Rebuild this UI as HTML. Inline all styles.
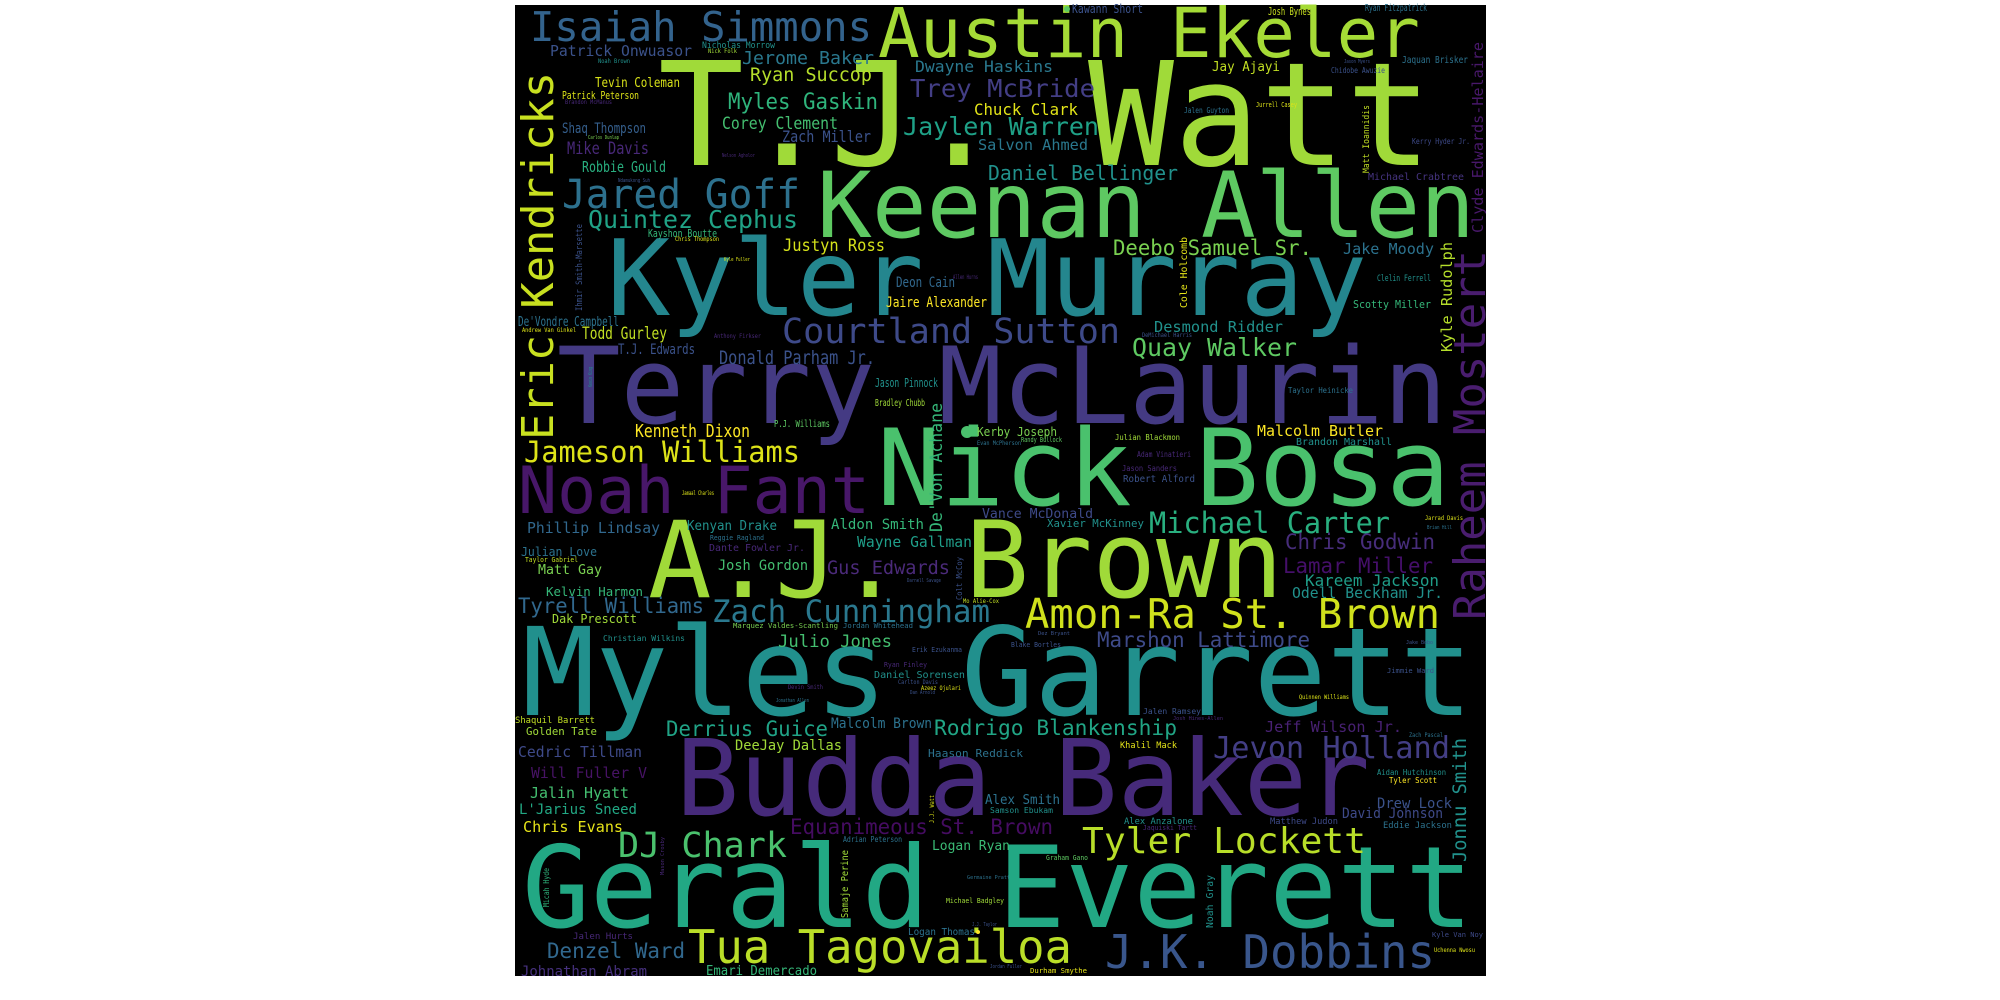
<!DOCTYPE html>
<html><head><meta charset="utf-8"><style>
html,body{margin:0;padding:0;background:#fff;width:2000px;height:1000px;overflow:hidden}
svg{display:block}
text{font-family:"DejaVu Sans Mono","Liberation Mono",monospace;}
</style></head><body>
<svg width="2000" height="1000" viewBox="0 0 2000 1000" xmlns="http://www.w3.org/2000/svg">
<rect x="0" y="0" width="2000" height="1000" fill="#fff"/>
<rect x="515" y="5" width="971" height="971" fill="#000"/>
<g lengthAdjust="spacingAndGlyphs">
<!-- big -->
<text x="658" y="165" font-size="144" fill="#a0da39" textLength="774" lengthAdjust="spacingAndGlyphs">T.J. Watt</text>
<text x="878" y="57" font-size="69" fill="#a5db36" textLength="542" lengthAdjust="spacingAndGlyphs">Austin Ekeler</text>
<text x="530" y="41" font-size="41" fill="#33638d" textLength="342" lengthAdjust="spacingAndGlyphs">Isaiah Simmons</text>
<text x="817" y="237" font-size="91" fill="#5ec962" textLength="658" lengthAdjust="spacingAndGlyphs">Keenan Allen</text>
<text x="607" y="315" font-size="105" fill="#24868e" textLength="760" lengthAdjust="spacingAndGlyphs">Kyler Murray</text>
<text x="557" y="423" font-size="106" fill="#443a83" textLength="890" lengthAdjust="spacingAndGlyphs">Terry McLaurin</text>
<text x="877" y="505" font-size="106" fill="#4ac16d" textLength="573" lengthAdjust="spacingAndGlyphs">Nick Bosa</text>
<text x="648" y="597" font-size="106" fill="#a0da39" textLength="635" lengthAdjust="spacingAndGlyphs">A.J. Brown</text>
<text x="522" y="715" font-size="122" fill="#21908d" textLength="951" lengthAdjust="spacingAndGlyphs">Myles Garrett</text>
<text x="676" y="815" font-size="105" fill="#462a7a" textLength="694" lengthAdjust="spacingAndGlyphs">Budda Baker</text>
<text x="522" y="927" font-size="113" fill="#22a884" textLength="951" lengthAdjust="spacingAndGlyphs">Gerald Everett</text>
<text x="518" y="513" font-size="65" fill="#481769" textLength="352" lengthAdjust="spacingAndGlyphs">Noah Fant</text>
<text transform="translate(553,440) rotate(-90)" font-size="44" fill="#c8e020" textLength="368" lengthAdjust="spacingAndGlyphs">Eric Kendricks</text>
<text transform="translate(1485,620) rotate(-90)" font-size="44" fill="#4a1d6f" textLength="370" lengthAdjust="spacingAndGlyphs">Raheem Mostert</text>
<text transform="translate(1483,233) rotate(-90)" font-size="15" fill="#48186a" textLength="191" lengthAdjust="spacingAndGlyphs">Clyde Edwards-Helaire</text>
<text x="562" y="208" font-size="40" fill="#2d718e" textLength="238" lengthAdjust="spacingAndGlyphs">Jared Goff</text>
<text x="782" y="343" font-size="35" fill="#3e4a89" textLength="338" lengthAdjust="spacingAndGlyphs">Courtland Sutton</text>
<text x="688" y="963" font-size="46" fill="#bade28" textLength="384" lengthAdjust="spacingAndGlyphs">Tua Tagovailoa</text>
<text x="1105" y="968" font-size="46" fill="#39568c" textLength="330" lengthAdjust="spacingAndGlyphs">J.K. Dobbins</text>
<text x="1025" y="628" font-size="41" fill="#d0e11c" textLength="415" lengthAdjust="spacingAndGlyphs">Amon-Ra St. Brown</text>
<text x="712" y="622" font-size="31" fill="#2a788e" textLength="278" lengthAdjust="spacingAndGlyphs">Zach Cunningham</text>
<text x="1082" y="853" font-size="36" fill="#b8de29" textLength="284" lengthAdjust="spacingAndGlyphs">Tyler Lockett</text>
<text x="1213" y="758" font-size="30" fill="#433e85" textLength="237" lengthAdjust="spacingAndGlyphs">Jevon Holland</text>
<text x="618" y="857" font-size="35" fill="#4ac16d" textLength="169" lengthAdjust="spacingAndGlyphs">DJ Chark</text>
<text x="1149" y="533" font-size="29" fill="#29af7f" textLength="241" lengthAdjust="spacingAndGlyphs">Michael Carter</text>
<text x="524" y="462" font-size="29" fill="#dde318" textLength="276" lengthAdjust="spacingAndGlyphs">Jameson Williams</text>
<text x="588" y="228" font-size="25" fill="#20a386" textLength="210" lengthAdjust="spacingAndGlyphs">Quintez Cephus</text>
<text x="1132" y="356" font-size="25" fill="#5ec962" textLength="165" lengthAdjust="spacingAndGlyphs">Quay Walker</text>
<text x="910" y="97" font-size="25" fill="#433e85" textLength="185" lengthAdjust="spacingAndGlyphs">Trey McBride</text>
<text x="903" y="135" font-size="25" fill="#1fa187" textLength="196" lengthAdjust="spacingAndGlyphs">Jaylen Warren</text>
<text x="934" y="735" font-size="21" fill="#21a585" textLength="243" lengthAdjust="spacingAndGlyphs">Rodrigo Blankenship</text>
<text x="790" y="834" font-size="21" fill="#450c61" textLength="263" lengthAdjust="spacingAndGlyphs">Equanimeous St. Brown</text>
<text x="1097" y="647" font-size="21" fill="#3e4a89" textLength="213" lengthAdjust="spacingAndGlyphs">Marshon Lattimore</text>
<text x="1285" y="549" font-size="21" fill="#472d7b" textLength="150" lengthAdjust="spacingAndGlyphs">Chris Godwin</text>
<text x="1283" y="573" font-size="21" fill="#450f6a" textLength="150" lengthAdjust="spacingAndGlyphs">Lamar Miller</text>
<text x="666" y="736" font-size="21" fill="#20a386" textLength="162" lengthAdjust="spacingAndGlyphs">Derrius Guice</text>
<text x="518" y="613" font-size="21" fill="#31688e" textLength="186" lengthAdjust="spacingAndGlyphs">Tyrell Williams</text>
<text x="547" y="958" font-size="21" fill="#31688e" textLength="138" lengthAdjust="spacingAndGlyphs">Denzel Ward</text>
<text x="1113" y="255" font-size="21" fill="#7ad151" textLength="199" lengthAdjust="spacingAndGlyphs">Deebo Samuel Sr.</text>
<text x="988" y="180" font-size="20" fill="#21918c" textLength="190" lengthAdjust="spacingAndGlyphs">Daniel Bellinger</text>
<text x="719" y="364" font-size="19" fill="#3b528b" textLength="156" lengthAdjust="spacingAndGlyphs">Donald Parham Jr.</text>
<text x="827" y="574" font-size="19" fill="#4b2a7a" textLength="123" lengthAdjust="spacingAndGlyphs">Gus Edwards</text>
<text x="742" y="64" font-size="18" fill="#2a788e" textLength="132" lengthAdjust="spacingAndGlyphs">Jerome Baker</text>
<text x="750" y="81" font-size="19" fill="#b5de2b" textLength="122" lengthAdjust="spacingAndGlyphs">Ryan Succop</text>
<text x="728" y="109" font-size="22" fill="#2fb47c" textLength="150" lengthAdjust="spacingAndGlyphs">Myles Gaskin</text>
<text x="722" y="129" font-size="17" fill="#44bf70" textLength="116" lengthAdjust="spacingAndGlyphs">Corey Clement</text>
<text x="782" y="142" font-size="16" fill="#3b528b" textLength="89" lengthAdjust="spacingAndGlyphs">Zach Miller</text>
<text x="783" y="251" font-size="17" fill="#d5e21a" textLength="102" lengthAdjust="spacingAndGlyphs">Justyn Ross</text>
<text x="635" y="437" font-size="18" fill="#fde725" textLength="115" lengthAdjust="spacingAndGlyphs">Kenneth Dixon</text>
<text x="778" y="647" font-size="17" fill="#44bf70" textLength="114" lengthAdjust="spacingAndGlyphs">Julio Jones</text>
<text x="582" y="339" font-size="17" fill="#c2df23" textLength="85" lengthAdjust="spacingAndGlyphs">Todd Gurley</text>
<text x="567" y="154" font-size="17" fill="#482878" textLength="82" lengthAdjust="spacingAndGlyphs">Mike Davis</text>
<text x="915" y="72" font-size="16" fill="#2a788e" textLength="138" lengthAdjust="spacingAndGlyphs">Dwayne Haskins</text>
<text x="974" y="115" font-size="16" fill="#e2e418" textLength="104" lengthAdjust="spacingAndGlyphs">Chuck Clark</text>
<text x="978" y="150" font-size="15" fill="#2a788e" textLength="110" lengthAdjust="spacingAndGlyphs">Salvon Ahmed</text>
<text x="550" y="56" font-size="15" fill="#3b528b" textLength="142" lengthAdjust="spacingAndGlyphs">Patrick Onwuasor</text>
<text x="562" y="133" font-size="14" fill="#355f8d" textLength="84" lengthAdjust="spacingAndGlyphs">Shaq Thompson</text>
<text x="582" y="172" font-size="15" fill="#29af7f" textLength="84" lengthAdjust="spacingAndGlyphs">Robbie Gould</text>
<text x="595" y="87" font-size="13" fill="#d8e219" textLength="85" lengthAdjust="spacingAndGlyphs">Tevin Coleman</text>
<text x="562" y="99" font-size="11" fill="#dde318" textLength="77" lengthAdjust="spacingAndGlyphs">Patrick Peterson</text>
<text x="565" y="104" font-size="6" fill="#482878" textLength="47" lengthAdjust="spacingAndGlyphs">Brandon McManus</text>
<text x="702" y="48" font-size="9" fill="#21918c" textLength="73" lengthAdjust="spacingAndGlyphs">Nicholas Morrow</text>
<text x="708" y="53" font-size="6" fill="#a0da39" textLength="29" lengthAdjust="spacingAndGlyphs">Nick Folk</text>
<text x="598" y="63" font-size="6" fill="#21918c" textLength="32" lengthAdjust="spacingAndGlyphs">Noah Brown</text>
<text x="588" y="139" font-size="5" fill="#7ad151" textLength="31" lengthAdjust="spacingAndGlyphs">Carlos Dunlap</text>
<text x="722" y="157" font-size="5" fill="#482878" textLength="33" lengthAdjust="spacingAndGlyphs">Nelson Agholor</text>
<text x="618" y="182" font-size="5" fill="#3b528b" textLength="32" lengthAdjust="spacingAndGlyphs">Ndamukong Suh</text>
<text x="648" y="237" font-size="11" fill="#35b779" textLength="69" lengthAdjust="spacingAndGlyphs">Kayshon Boutte</text>
<text x="675" y="241" font-size="6" fill="#dde318" textLength="44" lengthAdjust="spacingAndGlyphs">Chris Thompson</text>
<text transform="translate(582,311) rotate(-90)" font-size="9" fill="#3b528b" textLength="87" lengthAdjust="spacingAndGlyphs">Ihmir Smith-Marsette</text>
<text x="896" y="287" font-size="14" fill="#31688e" textLength="59" lengthAdjust="spacingAndGlyphs">Deon Cain</text>
<text x="953" y="279" font-size="6" fill="#482878" textLength="25" lengthAdjust="spacingAndGlyphs">Allen Hurns</text>
<text x="724" y="261" font-size="5" fill="#dde318" textLength="26" lengthAdjust="spacingAndGlyphs">Kyle Fuller</text>
<text x="886" y="307" font-size="14" fill="#fde725" textLength="101" lengthAdjust="spacingAndGlyphs">Jaire Alexander</text>
<text x="518" y="326" font-size="13" fill="#2c728e" textLength="101" lengthAdjust="spacingAndGlyphs">De'Vondre Campbell</text>
<text x="522" y="332" font-size="6" fill="#dde318" textLength="54" lengthAdjust="spacingAndGlyphs">Andrew Van Ginkel</text>
<text x="714" y="338" font-size="6" fill="#482878" textLength="47" lengthAdjust="spacingAndGlyphs">Anthony Firkser</text>
<text x="618" y="354" font-size="14" fill="#3b528b" textLength="77" lengthAdjust="spacingAndGlyphs">T.J. Edwards</text>
<text x="875" y="387" font-size="12" fill="#21918c" textLength="63" lengthAdjust="spacingAndGlyphs">Jason Pinnock</text>
<text x="875" y="406" font-size="10" fill="#a0da39" textLength="50" lengthAdjust="spacingAndGlyphs">Bradley Chubb</text>
<text x="774" y="427" font-size="10" fill="#5ec962" textLength="56" lengthAdjust="spacingAndGlyphs">P.J. Williams</text>
<text transform="translate(592,387) rotate(-90)" font-size="5" fill="#21918c" textLength="20" lengthAdjust="spacingAndGlyphs">Kevin King</text>
<text x="682" y="495" font-size="6" fill="#dde318" textLength="32" lengthAdjust="spacingAndGlyphs">Jamaal Charles</text>
<text transform="translate(942,532) rotate(-90)" font-size="17" fill="#35b779" textLength="129" lengthAdjust="spacingAndGlyphs">De'Von Achane</text>
<circle cx="967" cy="432" r="6" fill="#4ac16d"/>
<text x="977" y="436" font-size="12" fill="#7ad151" textLength="80" lengthAdjust="spacingAndGlyphs">Kerby Joseph</text>
<text x="977" y="445" font-size="6" fill="#2c728e" textLength="44" lengthAdjust="spacingAndGlyphs">Evan McPherson</text>
<text x="1021" y="442" font-size="7" fill="#5ec962" textLength="41" lengthAdjust="spacingAndGlyphs">Randy Bullock</text>
<!-- top right -->
<circle cx="1067" cy="9" r="3" fill="#5ec962"/>
<text x="1072" y="13" font-size="12" fill="#3b528b" textLength="71" lengthAdjust="spacingAndGlyphs">Kawann Short</text>
<text x="1268" y="15" font-size="11" fill="#c8e020" textLength="43" lengthAdjust="spacingAndGlyphs">Josh Bynes</text>
<text x="1365" y="11" font-size="10" fill="#2c728e" textLength="62" lengthAdjust="spacingAndGlyphs">Ryan Fitzpatrick</text>
<text x="1212" y="71" font-size="13" fill="#c2df23" textLength="68" lengthAdjust="spacingAndGlyphs">Jay Ajayi</text>
<text x="1402" y="63" font-size="10" fill="#2c728e" textLength="66" lengthAdjust="spacingAndGlyphs">Jaquan Brisker</text>
<text x="1344" y="63" font-size="5" fill="#3b528b" textLength="26" lengthAdjust="spacingAndGlyphs">Jason Myers</text>
<text x="1331" y="73" font-size="8" fill="#3b528b" textLength="54" lengthAdjust="spacingAndGlyphs">Chidobe Awuzie</text>
<text x="1184" y="113" font-size="8" fill="#2c728e" textLength="45" lengthAdjust="spacingAndGlyphs">Jalen Guyton</text>
<text x="1256" y="107" font-size="7" fill="#dde318" textLength="41" lengthAdjust="spacingAndGlyphs">Jurrell Casey</text>
<text transform="translate(1369,173) rotate(-90)" font-size="9" fill="#c2df23" textLength="68" lengthAdjust="spacingAndGlyphs">Matt Ioannidis</text>
<text x="1412" y="144" font-size="8" fill="#3e4a89" textLength="58" lengthAdjust="spacingAndGlyphs">Kerry Hyder Jr.</text>
<text x="1368" y="180" font-size="10" fill="#463480" textLength="96" lengthAdjust="spacingAndGlyphs">Michael Crabtree</text>
<text transform="translate(1187,308) rotate(-90)" font-size="10" fill="#e5e419" textLength="71" lengthAdjust="spacingAndGlyphs">Cole Holcomb</text>
<text x="1343" y="254" font-size="15" fill="#2c728e" textLength="91" lengthAdjust="spacingAndGlyphs">Jake Moody</text>
<text transform="translate(1452,352) rotate(-90)" font-size="15" fill="#b5de2b" textLength="110" lengthAdjust="spacingAndGlyphs">Kyle Rudolph</text>
<text x="1377" y="281" font-size="9" fill="#21918c" textLength="54" lengthAdjust="spacingAndGlyphs">Clelin Ferrell</text>
<text x="1353" y="308" font-size="11" fill="#35b779" textLength="78" lengthAdjust="spacingAndGlyphs">Scotty Miller</text>
<text x="1154" y="332" font-size="15" fill="#21918c" textLength="129" lengthAdjust="spacingAndGlyphs">Desmond Ridder</text>
<text x="1142" y="337" font-size="6" fill="#3b528b" textLength="50" lengthAdjust="spacingAndGlyphs">DeMichael Harris</text>
<text x="1288" y="393" font-size="8" fill="#2c728e" textLength="65" lengthAdjust="spacingAndGlyphs">Taylor Heinicke</text>
<text x="1257" y="436" font-size="15" fill="#fde725" textLength="126" lengthAdjust="spacingAndGlyphs">Malcolm Butler</text>
<text x="1296" y="445" font-size="10" fill="#21918c" textLength="96" lengthAdjust="spacingAndGlyphs">Brandon Marshall</text>
<text x="1115" y="440" font-size="8" fill="#a0da39" textLength="65" lengthAdjust="spacingAndGlyphs">Julian Blackmon</text>
<text x="1137" y="457" font-size="8" fill="#482878" textLength="54" lengthAdjust="spacingAndGlyphs">Adam Vinatieri</text>
<text x="1122" y="471" font-size="8" fill="#482878" textLength="55" lengthAdjust="spacingAndGlyphs">Jason Sanders</text>
<text x="1123" y="482" font-size="10" fill="#3b528b" textLength="72" lengthAdjust="spacingAndGlyphs">Robert Alford</text>
<!-- bottom left -->
<text x="527" y="533" font-size="15" fill="#31688e" textLength="133" lengthAdjust="spacingAndGlyphs">Phillip Lindsay</text>
<text x="687" y="530" font-size="13" fill="#21918c" textLength="90" lengthAdjust="spacingAndGlyphs">Kenyan Drake</text>
<text x="710" y="540" font-size="7" fill="#2c728e" textLength="54" lengthAdjust="spacingAndGlyphs">Reggie Ragland</text>
<text x="709" y="551" font-size="10" fill="#482878" textLength="96" lengthAdjust="spacingAndGlyphs">Dante Fowler Jr.</text>
<text x="831" y="529" font-size="14" fill="#35b779" textLength="93" lengthAdjust="spacingAndGlyphs">Aldon Smith</text>
<text x="857" y="547" font-size="15" fill="#1f9e89" textLength="115" lengthAdjust="spacingAndGlyphs">Wayne Gallman</text>
<text x="521" y="556" font-size="12" fill="#2c728e" textLength="76" lengthAdjust="spacingAndGlyphs">Julian Love</text>
<text x="525" y="562" font-size="7" fill="#c2df23" textLength="53" lengthAdjust="spacingAndGlyphs">Taylor Gabriel</text>
<text x="538" y="574" font-size="13" fill="#7ad151" textLength="64" lengthAdjust="spacingAndGlyphs">Matt Gay</text>
<text x="718" y="570" font-size="14" fill="#44bf70" textLength="90" lengthAdjust="spacingAndGlyphs">Josh Gordon</text>
<text transform="translate(962,600) rotate(-90)" font-size="8" fill="#3b528b" textLength="43" lengthAdjust="spacingAndGlyphs">Colt McCoy</text>
<text x="907" y="582" font-size="5" fill="#3b528b" textLength="34" lengthAdjust="spacingAndGlyphs">Darnell Savage</text>
<text x="546" y="596" font-size="12" fill="#35b779" textLength="97" lengthAdjust="spacingAndGlyphs">Kelvin Harmon</text>
<text x="963" y="603" font-size="6" fill="#c2df23" textLength="36" lengthAdjust="spacingAndGlyphs">Mo Alie-Cox</text>
<text x="552" y="623" font-size="12" fill="#a0da39" textLength="85" lengthAdjust="spacingAndGlyphs">Dak Prescott</text>
<text x="733" y="628" font-size="7" fill="#7ad151" textLength="105" lengthAdjust="spacingAndGlyphs">Marquez Valdes-Scantling</text>
<text x="843" y="628" font-size="7" fill="#2c728e" textLength="70" lengthAdjust="spacingAndGlyphs">Jordan Whitehead</text>
<text x="603" y="641" font-size="8" fill="#21918c" textLength="82" lengthAdjust="spacingAndGlyphs">Christian Wilkins</text>
<text x="912" y="652" font-size="7" fill="#3b528b" textLength="50" lengthAdjust="spacingAndGlyphs">Erik Ezukanma</text>
<text x="884" y="667" font-size="7" fill="#482878" textLength="43" lengthAdjust="spacingAndGlyphs">Ryan Finley</text>
<text x="874" y="678" font-size="10" fill="#21918c" textLength="91" lengthAdjust="spacingAndGlyphs">Daniel Sorensen</text>
<text x="898" y="684" font-size="6" fill="#3b528b" textLength="40" lengthAdjust="spacingAndGlyphs">Carlton Davis</text>
<text x="921" y="690" font-size="6" fill="#dde318" textLength="40" lengthAdjust="spacingAndGlyphs">Azeez Ojulari</text>
<text x="910" y="694" font-size="5" fill="#3b528b" textLength="25" lengthAdjust="spacingAndGlyphs">Dan Arnold</text>
<text x="788" y="689" font-size="6" fill="#482878" textLength="35" lengthAdjust="spacingAndGlyphs">Devin Smith</text>
<text x="776" y="702" font-size="5" fill="#2c728e" textLength="33" lengthAdjust="spacingAndGlyphs">Jonathan Allen</text>
<text x="515" y="723" font-size="9" fill="#c2df23" textLength="80" lengthAdjust="spacingAndGlyphs">Shaquil Barrett</text>
<text x="526" y="735" font-size="11" fill="#a0da39" textLength="71" lengthAdjust="spacingAndGlyphs">Golden Tate</text>
<text x="831" y="728" font-size="14" fill="#2c728e" textLength="101" lengthAdjust="spacingAndGlyphs">Malcolm Brown</text>
<text x="735" y="750" font-size="14" fill="#a0da39" textLength="107" lengthAdjust="spacingAndGlyphs">DeeJay Dallas</text>
<text x="518" y="757" font-size="15" fill="#3e4a89" textLength="124" lengthAdjust="spacingAndGlyphs">Cedric Tillman</text>
<text x="928" y="757" font-size="11" fill="#2c728e" textLength="95" lengthAdjust="spacingAndGlyphs">Haason Reddick</text>
<text x="531" y="778" font-size="15" fill="#471365" textLength="116" lengthAdjust="spacingAndGlyphs">Will Fuller V</text>
<text x="530" y="798" font-size="15" fill="#44bf70" textLength="99" lengthAdjust="spacingAndGlyphs">Jalin Hyatt</text>
<text x="519" y="814" font-size="14" fill="#22a884" textLength="118" lengthAdjust="spacingAndGlyphs">L'Jarius Sneed</text>
<text x="523" y="832" font-size="15" fill="#e7e419" textLength="100" lengthAdjust="spacingAndGlyphs">Chris Evans</text>
<text x="985" y="804" font-size="13" fill="#2c728e" textLength="75" lengthAdjust="spacingAndGlyphs">Alex Smith</text>
<text x="990" y="813" font-size="8" fill="#21918c" textLength="63" lengthAdjust="spacingAndGlyphs">Samson Ebukam</text>
<text transform="translate(934,823) rotate(-90)" font-size="6" fill="#dde318" textLength="28" lengthAdjust="spacingAndGlyphs">J.J. Watt</text>
<text x="843" y="842" font-size="8" fill="#2c728e" textLength="59" lengthAdjust="spacingAndGlyphs">Adrian Peterson</text>
<text x="932" y="850" font-size="13" fill="#3bbb75" textLength="78" lengthAdjust="spacingAndGlyphs">Logan Ryan</text>
<text transform="translate(664,875) rotate(-90)" font-size="5" fill="#482878" textLength="38" lengthAdjust="spacingAndGlyphs">Mason Crosby</text>
<text transform="translate(549,907) rotate(-90)" font-size="8" fill="#2fb47c" textLength="39" lengthAdjust="spacingAndGlyphs">Micah Hyde</text>
<text transform="translate(848,918) rotate(-90)" font-size="10" fill="#a0da39" textLength="68" lengthAdjust="spacingAndGlyphs">Samaje Perine</text>
<text x="967" y="879" font-size="5" fill="#2c728e" textLength="43" lengthAdjust="spacingAndGlyphs">Germaine Pratt</text>
<text x="946" y="903" font-size="7" fill="#a0da39" textLength="58" lengthAdjust="spacingAndGlyphs">Michael Badgley</text>
<text x="972" y="926" font-size="5" fill="#3b528b" textLength="25" lengthAdjust="spacingAndGlyphs">J.J. Taylor</text>
<text x="573" y="939" font-size="9" fill="#482878" textLength="60" lengthAdjust="spacingAndGlyphs">Jalen Hurts</text>
<text x="908" y="935" font-size="10" fill="#2c728e" textLength="67" lengthAdjust="spacingAndGlyphs">Logan Thomas</text>
<circle cx="978" cy="932" r="2" fill="#fde725"/>
<text x="521" y="976" font-size="14" fill="#46307e" textLength="126" lengthAdjust="spacingAndGlyphs">Johnathan Abram</text>
<text x="706" y="975" font-size="13" fill="#35b779" textLength="111" lengthAdjust="spacingAndGlyphs">Emari Demercado</text>
<text x="990" y="968" font-size="5" fill="#3b528b" textLength="32" lengthAdjust="spacingAndGlyphs">Jordan Fuller</text>
<!-- bottom right -->
<text x="982" y="518" font-size="13" fill="#3e4a89" textLength="111" lengthAdjust="spacingAndGlyphs">Vance McDonald</text>
<text x="1047" y="527" font-size="11" fill="#21918c" textLength="97" lengthAdjust="spacingAndGlyphs">Xavier McKinney</text>
<text x="1425" y="520" font-size="6" fill="#dde318" textLength="38" lengthAdjust="spacingAndGlyphs">Jarrad Davis</text>
<text x="1427" y="529" font-size="5" fill="#2c728e" textLength="25" lengthAdjust="spacingAndGlyphs">Brian Hill</text>
<text x="1305" y="586" font-size="16" fill="#1f9e89" textLength="134" lengthAdjust="spacingAndGlyphs">Kareem Jackson</text>
<text x="1292" y="598" font-size="15" fill="#21918c" textLength="151" lengthAdjust="spacingAndGlyphs">Odell Beckham Jr.</text>
<text x="1038" y="635" font-size="5" fill="#3b528b" textLength="32" lengthAdjust="spacingAndGlyphs">Dez Bryant</text>
<text x="1011" y="647" font-size="7" fill="#3b528b" textLength="50" lengthAdjust="spacingAndGlyphs">Blake Bortles</text>
<text x="1406" y="644" font-size="5" fill="#3b528b" textLength="27" lengthAdjust="spacingAndGlyphs">Jake Bobo</text>
<text x="1387" y="673" font-size="7" fill="#3b528b" textLength="47" lengthAdjust="spacingAndGlyphs">Jimmie Ward</text>
<text x="1299" y="699" font-size="6" fill="#dde318" textLength="50" lengthAdjust="spacingAndGlyphs">Quinnen Williams</text>
<text x="1143" y="714" font-size="8" fill="#3b528b" textLength="58" lengthAdjust="spacingAndGlyphs">Jalen Ramsey</text>
<text x="1173" y="720" font-size="5" fill="#482878" textLength="50" lengthAdjust="spacingAndGlyphs">Josh Hines-Allen</text>
<text x="1265" y="732" font-size="15" fill="#482173" textLength="137" lengthAdjust="spacingAndGlyphs">Jeff Wilson Jr.</text>
<text x="1409" y="737" font-size="6" fill="#2c728e" textLength="34" lengthAdjust="spacingAndGlyphs">Zach Pascal</text>
<text x="1120" y="748" font-size="9" fill="#e5e419" textLength="57" lengthAdjust="spacingAndGlyphs">Khalil Mack</text>
<text transform="translate(1466,862) rotate(-90)" font-size="19" fill="#21918c" textLength="124" lengthAdjust="spacingAndGlyphs">Jonnu Smith</text>
<text x="1377" y="775" font-size="8" fill="#21918c" textLength="69" lengthAdjust="spacingAndGlyphs">Aidan Hutchinson</text>
<text x="1389" y="783" font-size="8" fill="#fde725" textLength="48" lengthAdjust="spacingAndGlyphs">Tyler Scott</text>
<text x="1377" y="808" font-size="14" fill="#3b528b" textLength="75" lengthAdjust="spacingAndGlyphs">Drew Lock</text>
<text x="1342" y="818" font-size="14" fill="#3e4a89" textLength="101" lengthAdjust="spacingAndGlyphs">David Johnson</text>
<text x="1383" y="828" font-size="9" fill="#2c728e" textLength="69" lengthAdjust="spacingAndGlyphs">Eddie Jackson</text>
<text x="1124" y="824" font-size="9" fill="#21918c" textLength="69" lengthAdjust="spacingAndGlyphs">Alex Anzalone</text>
<text x="1143" y="830" font-size="7" fill="#482878" textLength="54" lengthAdjust="spacingAndGlyphs">Jaquiski Tartt</text>
<text x="1270" y="824" font-size="9" fill="#3e4a89" textLength="68" lengthAdjust="spacingAndGlyphs">Matthew Judon</text>
<text x="1046" y="860" font-size="7" fill="#5ec962" textLength="42" lengthAdjust="spacingAndGlyphs">Graham Gano</text>
<text transform="translate(1213,928) rotate(-90)" font-size="10" fill="#21918c" textLength="53" lengthAdjust="spacingAndGlyphs">Noah Gray</text>
<text x="1432" y="937" font-size="7" fill="#3e4a89" textLength="51" lengthAdjust="spacingAndGlyphs">Kyle Van Noy</text>
<text x="1434" y="952" font-size="6" fill="#dde318" textLength="41" lengthAdjust="spacingAndGlyphs">Uchenna Nwosu</text>
<text x="1030" y="973" font-size="7" fill="#e5e419" textLength="57" lengthAdjust="spacingAndGlyphs">Durham Smythe</text>
</g>
</svg>
</body></html>
